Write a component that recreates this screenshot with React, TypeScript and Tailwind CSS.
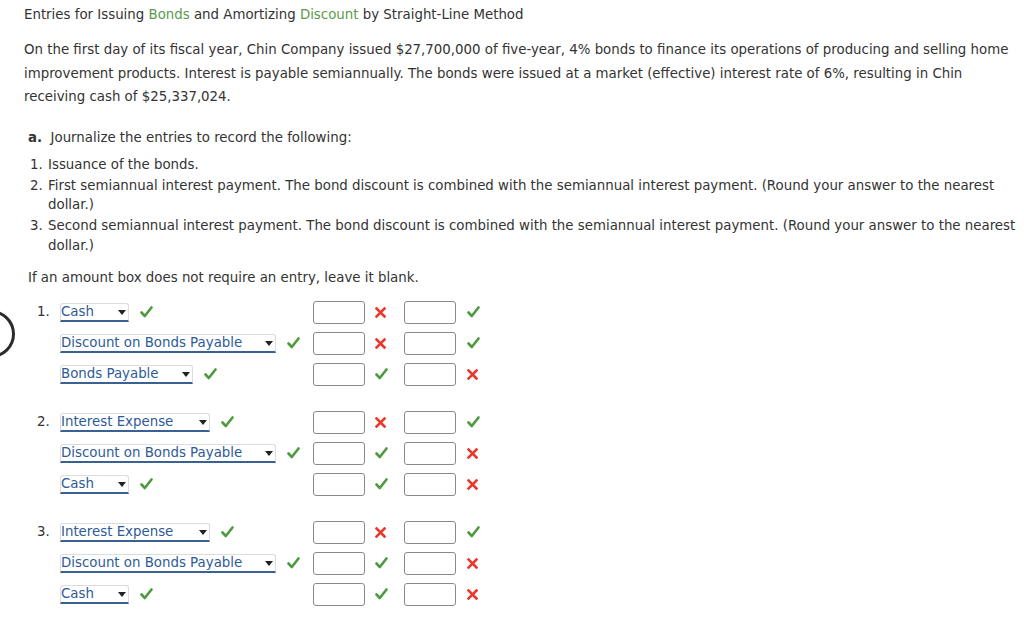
import React from "react";

const Check = () => (
  <svg width="13" height="12" viewBox="0 0 13 12" className="shrink-0">
    <path d="M1.5 6.5 L4.8 10 L11.5 1.5" fill="none" stroke="#4e9a3f" strokeWidth="2.6" strokeLinecap="round" strokeLinejoin="round" />
  </svg>
);

const Cross = () => (
  <svg width="11" height="11" viewBox="0 0 11 11" className="shrink-0">
    <path d="M1.5 1.5 L9.5 9.5 M9.5 1.5 L1.5 9.5" fill="none" stroke="#e8392c" strokeWidth="2.6" strokeLinecap="square" />
  </svg>
);

const Select = ({ label, width }: { label: string; width: number }) => (
  <div
    className="relative flex items-center h-[19px] border-t border-l border-r border-[#dcdcdc] rounded-t-[3px] border-b-2 border-b-[#3b6193] bg-white text-[#2e5b97] leading-[16px]"
    style={{ width }}
  >
    <span>{label}</span>
    <svg width="8" height="5" viewBox="0 0 8 5" className="absolute right-[2px] top-[6px]">
      <path d="M0 0 L8 0 L4 5 Z" fill="#222" />
    </svg>
  </div>
);

const Box = () => <div className="w-[52px] h-[23px] border border-[#8a8a8a] rounded-[3px] bg-white shrink-0" />;

type Row = { label: string; width: number; m1: boolean; m2: boolean };

const EntryRow = ({ num, row }: { num?: string; row: Row }) => (
  <div className="flex items-center h-[31px]">
    <div className="w-[23px] shrink-0 text-[#333]">{num ?? ""}</div>
    <div className="w-[253px] shrink-0 flex items-center gap-[11px]">
      <Select label={row.label} width={row.width} />
      <Check />
    </div>
    <Box />
    <div className="w-[39px] shrink-0 flex items-center pl-[10px]">{row.m1 ? <Check /> : <Cross />}</div>
    <Box />
    <div className="w-[39px] shrink-0 flex items-center pl-[11px]">{row.m2 ? <Check /> : <Cross />}</div>
  </div>
);

const groups: { num: string; rows: Row[] }[] = [
  {
    num: "1.",
    rows: [
      { label: "Cash", width: 69, m1: false, m2: true },
      { label: "Discount on Bonds Payable", width: 216, m1: false, m2: true },
      { label: "Bonds Payable", width: 133, m1: true, m2: false },
    ],
  },
  {
    num: "2.",
    rows: [
      { label: "Interest Expense", width: 150, m1: false, m2: true },
      { label: "Discount on Bonds Payable", width: 216, m1: true, m2: false },
      { label: "Cash", width: 69, m1: true, m2: false },
    ],
  },
  {
    num: "3.",
    rows: [
      { label: "Interest Expense", width: 150, m1: false, m2: true },
      { label: "Discount on Bonds Payable", width: 216, m1: true, m2: false },
      { label: "Cash", width: 69, m1: true, m2: false },
    ],
  },
];

export default function App() {
  return (
    <div
      className="relative w-[1024px] h-[630px] overflow-hidden bg-white text-[#333] text-[13.35px]"
      style={{ fontFamily: '"DejaVu Sans", Verdana, sans-serif' }}
    >
      <div className="absolute left-[-33px] top-[310px] w-[48px] h-[48px] rounded-full border-[3px] border-[#2b2b2b]" />
      <div className="pl-[24px] pr-[2px] pt-[5px]">
        <div className="leading-[20px]">
          Entries for Issuing <span className="text-[#5b9a4c]">Bonds</span> and Amortizing{" "}
          <span className="text-[#5b9a4c]">Discount</span> by Straight-Line Method
        </div>
        <p className="mt-[13px] leading-[23.5px] pr-[8px]">
          On the first day of its fiscal year, Chin Company issued $27,700,000 of five-year, 4% bonds to finance its operations of producing and selling home improvement products. Interest is payable semiannually. The bonds were issued at a market (effective) interest rate of 6%, resulting in Chin receiving cash of $25,337,024.
        </p>
        <div className="pl-[4px] mt-[19px] leading-[20px]">
          <span className="font-bold">a.</span>&nbsp; Journalize the entries to record the following:
        </div>
        <ol className="mt-[7px] pl-[6px] leading-[19.5px]">
          <li className="flex">
            <span className="w-[18px] shrink-0">1.</span>
            <span>Issuance of the bonds.</span>
          </li>
          <li className="flex mt-[1.5px]">
            <span className="w-[18px] shrink-0">2.</span>
            <span>
              First semiannual interest payment. The bond discount is combined with the semiannual interest payment. (Round your answer to the nearest dollar.)
            </span>
          </li>
          <li className="flex mt-[1.5px]">
            <span className="w-[18px] shrink-0">3.</span>
            <span>
              Second semiannual interest payment. The bond discount is combined with the semiannual interest payment. (Round your answer to the nearest dollar.)
            </span>
          </li>
        </ol>
        <div className="pl-[4px] mt-[13px] leading-[20px]">If an amount box does not require an entry, leave it blank.</div>
        <div className="pl-[13px] mt-[8.5px] flex flex-col gap-[17px]">
          {groups.map((g) => (
            <div key={g.num}>
              {g.rows.map((r, i) => (
                <EntryRow key={i} num={i === 0 ? g.num : undefined} row={r} />
              ))}
            </div>
          ))}
        </div>
      </div>
    </div>
  );
}
